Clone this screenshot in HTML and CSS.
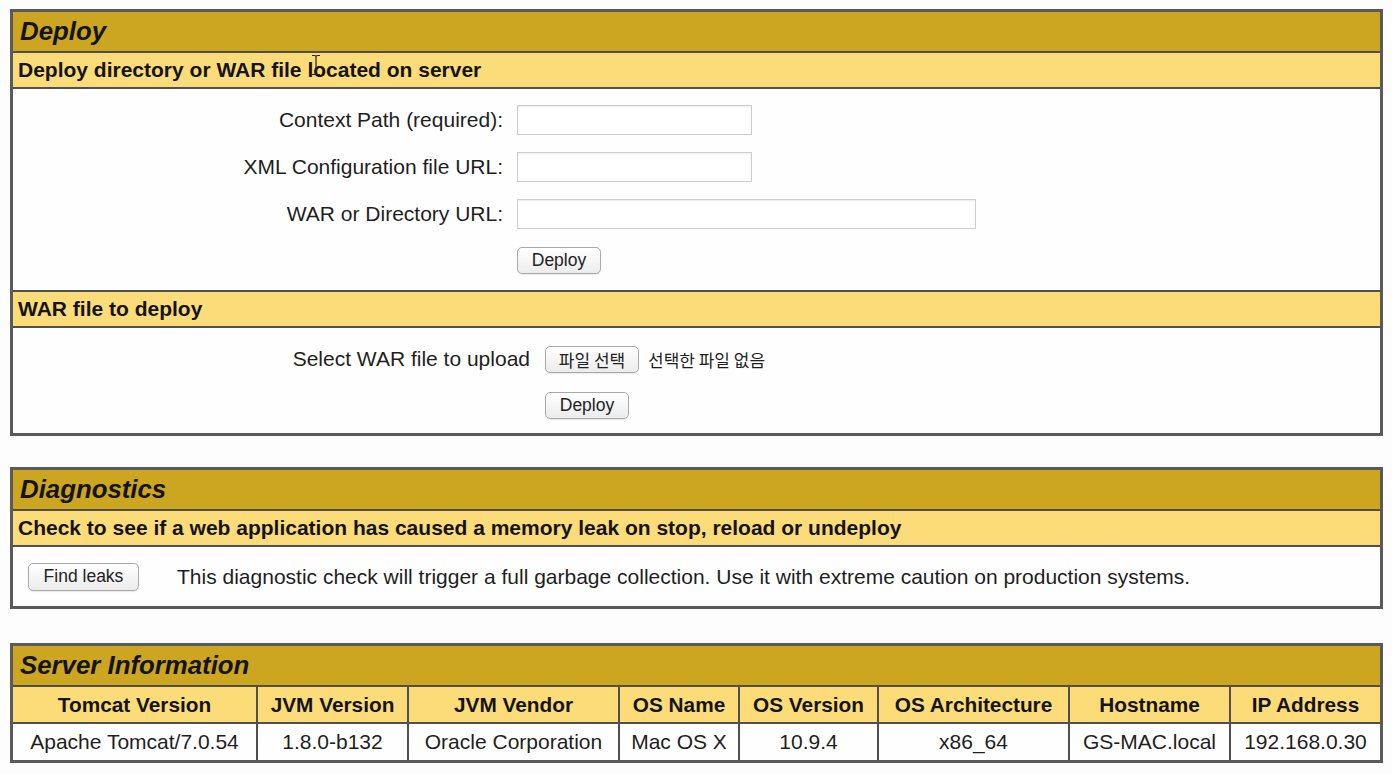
FILE: index.html
```html
<!DOCTYPE html>
<html>
<head>
<meta charset="utf-8">
<title>Tomcat Manager</title>
<link rel="stylesheet" href="styles.css">
</head>
<body>
<div class="page">
  <section class="box box-deploy">
    <div class="title">Deploy</div>
    <div class="subtitle">Deploy directory or WAR file located on server</div>
    <div class="body form-body">
      <div class="form-grid">
        <label class="lbl">Context Path (required):</label>
        <div class="field"><input class="inp inp-short" type="text"></div>
        <label class="lbl">XML Configuration file URL:</label>
        <div class="field"><input class="inp inp-short" type="text"></div>
        <label class="lbl">WAR or Directory URL:</label>
        <div class="field"><input class="inp inp-long" type="text"></div>
        <span></span>
        <div class="field btn-row"><button class="btn btn-deploy">Deploy</button></div>
      </div>
    </div>
    <div class="subtitle">WAR file to deploy</div>
    <div class="body war-body">
      <div class="war-grid">
        <label class="lbl">Select WAR file to upload</label>
        <div class="field file-field"><button class="btn btn-file">파일 선택</button><span class="file-none">선택한 파일 없음</span></div>
        <span></span>
        <div class="field"><button class="btn btn-deploy2">Deploy</button></div>
      </div>
    </div>
    <svg class="cursor" width="10" height="22" viewBox="0 0 10 22"><path d="M1 1.5h2.5c1 0 1.5.6 1.5 1.5M9 1.5H6.5c-1 0-1.5.6-1.5 1.5v16c0 .9-.5 1.5-1.5 1.5H1M9 20.5H6.5c-1 0-1.5-.6-1.5-1.5" fill="none" stroke="#222" stroke-width="1.2"/></svg>
  </section>

  <section class="box box-diag">
    <div class="title">Diagnostics</div>
    <div class="subtitle">Check to see if a web application has caused a memory leak on stop, reload or undeploy</div>
    <div class="body diag-body">
      <button class="btn btn-leaks">Find leaks</button>
      <span class="diag-text">This diagnostic check will trigger a full garbage collection. Use it with extreme caution on production systems.</span>
    </div>
  </section>

  <section class="box box-info">
    <div class="title">Server Information</div>
    <div class="info-grid">
      <div class="th">Tomcat Version</div>
      <div class="th">JVM Version</div>
      <div class="th">JVM Vendor</div>
      <div class="th">OS Name</div>
      <div class="th">OS Version</div>
      <div class="th">OS Architecture</div>
      <div class="th">Hostname</div>
      <div class="th last">IP Address</div>
      <div class="td">Apache Tomcat/7.0.54</div>
      <div class="td">1.8.0-b132</div>
      <div class="td">Oracle Corporation</div>
      <div class="td">Mac OS X</div>
      <div class="td">10.9.4</div>
      <div class="td">x86_64</div>
      <div class="td">GS-MAC.local</div>
      <div class="td last">192.168.0.30</div>
    </div>
  </section>
</div>
</body>
</html>
```

FILE: styles.css
```css
html, body {
  margin: 0;
  padding: 0;
  background: #fdfdfd;
}
body {
  font-family: "Liberation Sans", Arial, Helvetica, sans-serif;
  color: #1e1e1e;
}
.page {
  padding: 9px 9px 0 10px;
  width: 1373px;
}
.box {
  position: relative;
  border: 3px solid #5a5a5a;
  background: #fefefe;
}
.box-diag { margin-top: 31px; }
.box-info { margin-top: 34px; }

.title {
  background: #cca620;
  height: 39px;
  border-bottom: 2px solid #4f4f4f;
  display: flex;
  align-items: center;
  padding-left: 7px;
  font-size: 25.8px;
  font-weight: bold;
  font-style: italic;
  color: #141414;
}
.box-info .title { height: 39px; }
.subtitle {
  background: #fcdc79;
  height: 34px;
  border-bottom: 2px solid #4f4f4f;
  display: flex;
  align-items: center;
  padding-left: 5px;
  font-size: 21px;
  font-weight: bold;
  color: #141414;
}
.body {
  background: #fefefe;
}
.form-body {
  height: 203px;
  border-bottom: 2px solid #4f4f4f;
  box-sizing: border-box;
  padding-top: 15px;
}
.form-grid {
  display: grid;
  grid-template-columns: 490px auto;
  column-gap: 14px;
  grid-auto-rows: 47px;
}
.lbl {
  font-size: 21px;
  text-align: right;
  line-height: 32px;
  color: #1e1e1e;
}
.field {
  display: flex;
  align-items: center;
  height: 32px;
}
.inp {
  height: 30px;
  box-sizing: border-box;
  border: 1px solid #cdcdcd;
  box-shadow: inset 0 1px 2px rgba(0,0,0,0.08);
  background: #fff;
  margin: 0;
  padding: 0 4px;
}
.inp-short { width: 235px; }
.inp-long { width: 459px; }
.btn-row { height: 30px; }

.btn {
  font-family: "Liberation Sans", Arial, sans-serif;
  font-size: 17.5px;
  color: #222;
  height: 27px;
  box-sizing: border-box;
  border: 1px solid #a9a9a9;
  border-radius: 5px;
  background: linear-gradient(#ffffff, #ececec);
  box-shadow: 0 1px 1px rgba(0,0,0,0.08);
  padding: 0;
  margin: 0;
}
.btn-deploy, .btn-deploy2 { width: 84px; }
.btn-file {
  width: 94px;
  font-family: "Noto Sans CJK KR", sans-serif;
  font-size: 17px;
}
.btn-leaks { width: 111px; height: 28px; }

.war-body {
  height: 105px;
  box-sizing: border-box;
  padding-top: 15px;
}
.war-grid {
  display: grid;
  grid-template-columns: 517px auto;
  column-gap: 15px;
  grid-template-rows: 32px 31px;
  row-gap: 14px;
}
.war-grid .lbl { line-height: 32px; }
.file-field { gap: 9px; }
.file-none {
  font-family: "Noto Sans CJK KR", sans-serif;
  font-size: 17px;
  color: #1e1e1e;
}

.cursor {
  position: absolute;
  left: 298px;
  top: 42px;
}

.diag-body {
  height: 59px;
  display: flex;
  align-items: center;
  padding-left: 15px;
  gap: 38px;
}
.diag-text {
  font-size: 21px;
  color: #1e1e1e;
}

.info-grid {
  display: grid;
  grid-template-columns: 245px 151px 211px 120px 139px 191px 161px 1fr;
  background: #fefefe;
}
.th, .td {
  display: flex;
  align-items: center;
  justify-content: center;
  border-right: 2px solid #4f4f4f;
  white-space: nowrap;
}
.th {
  background: #fcdc79;
  height: 35px;
  border-bottom: 2px solid #4f4f4f;
  font-weight: bold;
  font-size: 20.8px;
  color: #141414;
}
.td {
  height: 36px;
  font-size: 21px;
  color: #1e1e1e;
}
.last { border-right: none; }
```
